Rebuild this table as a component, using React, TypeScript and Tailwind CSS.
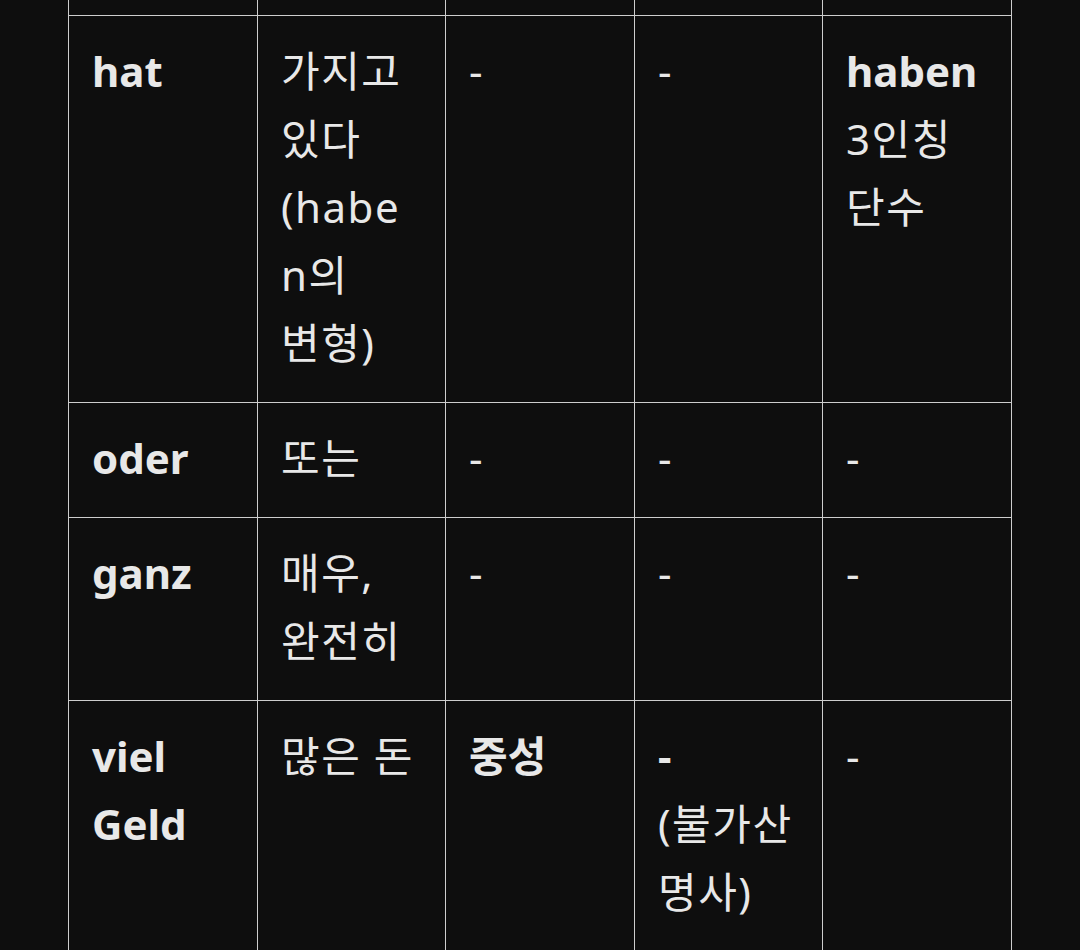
import React from "react";

type Line = { t: string; b?: boolean };
type Cell = Line[];

const rows: Cell[][] = [
  [
    [{ t: "hat", b: true }],
    [{ t: "가지고" }, { t: "있다" }, { t: "(habe" }, { t: "n의" }, { t: "변형)" }],
    [{ t: "-" }],
    [{ t: "-" }],
    [{ t: "haben", b: true }, { t: "3인칭" }, { t: "단수" }],
  ],
  [
    [{ t: "oder", b: true }],
    [{ t: "또는" }],
    [{ t: "-" }],
    [{ t: "-" }],
    [{ t: "-" }],
  ],
  [
    [{ t: "ganz", b: true }],
    [{ t: "매우," }, { t: "완전히" }],
    [{ t: "-" }],
    [{ t: "-" }],
    [{ t: "-" }],
  ],
  [
    [{ t: "viel", b: true }, { t: "Geld", b: true }],
    [{ t: "많은 돈" }],
    [{ t: "중성", b: true }],
    [{ t: "-", b: true }, { t: "(불가산" }, { t: "명사)" }],
    [{ t: "-" }],
  ],
];

export default function App() {
  return (
    <div className="min-h-screen w-full bg-[#0e0e0e] font-['Noto_Sans','Noto_Sans_CJK_KR',sans-serif] text-[42px] leading-[68px] text-[#e8e8e8]">
      <div className="ml-[68px] grid w-[944px] grid-cols-[188px_187px_188px_187px_188px] gap-px bg-[#cdcdcd] px-px">
        {[0, 1, 2, 3, 4].map((i) => (
          <div key={"top" + i} className="h-[15px] bg-[#0e0e0e]" />
        ))}
        {rows.map((row, ri) =>
          row.map((cell, ci) => (
            <div key={ri + "-" + ci} className="bg-[#0e0e0e] px-[23px] pt-[21px] pb-[25px]">
              {cell.map((line, li) => (
                <div
                  key={li}
                  className={
                    "whitespace-nowrap " +
                    (line.b ? "font-bold" : "font-normal tracking-[1.5px]")
                  }
                >
                  {line.t}
                </div>
              ))}
            </div>
          ))
        )}
      </div>
    </div>
  );
}
